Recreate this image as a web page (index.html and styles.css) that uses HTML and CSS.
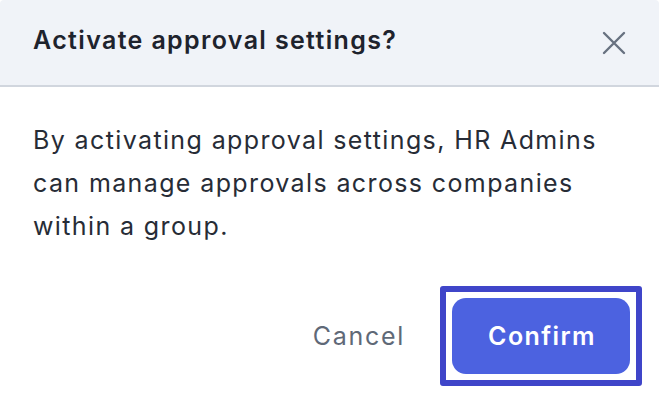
FILE: index.html
```html
<!DOCTYPE html>
<html lang="en">
<head>
<meta charset="utf-8">
<link rel="stylesheet" href="styles.css">
</head>
<body>
<div class="dialog">
  <div class="dialog-header">
    <h2 class="dialog-title">Activate approval settings?</h2>
    <button class="close-btn" aria-label="Close">
      <svg width="24" height="24" viewBox="0 0 24 24" fill="none" stroke="currentColor" stroke-width="2.4" stroke-linecap="round"><path d="M2 2L22 22M22 2L2 22"/></svg>
    </button>
  </div>
  <div class="dialog-body">
    <p class="dialog-text">By activating approval settings, HR Admins can manage approvals across companies within a group.</p>
  </div>
  <div class="dialog-footer">
    <button class="btn-cancel">Cancel</button>
    <span class="focus-ring"><button class="btn-confirm">Confirm</button></span>
  </div>
</div>
</body>
</html>
```

FILE: styles.css
```css
* { box-sizing: border-box; }
html, body { margin: 0; padding: 0; background: #ffffff; }
body { font-family: "Inter", "Noto Sans", sans-serif; width: 659px; height: 408px; overflow: hidden; }
.dialog { width: 659px; height: 408px; display: flex; flex-direction: column; background: #fff; border-radius: 4px 4px 0 0; overflow: hidden; }
.dialog-header {
  height: 87px;
  background: #f0f3f8;
  border-bottom: 2px solid #d1d6de;
  display: flex;
  align-items: center;
  justify-content: space-between;
  padding: 0 33px 5px 33px;
}
.dialog-title { margin: 0; font-size: 25px; font-weight: 600; color: #1e232d; letter-spacing: 1.35px; }
.close-btn { background: none; border: 0; padding: 0; color: #687180; display: flex; width: 24px; height: 24px; margin-top: 5px; }
.dialog-body { padding: 32px 33px 0 33px; }
.dialog-text { margin: 0; font-size: 25px; line-height: 43px; color: #272c36; width: 590px; letter-spacing: 1.38px; }
.dialog-footer { display: flex; justify-content: flex-end; align-items: center; padding: 38px 17px 21px 0; gap: 35px; }
.btn-cancel { background: none; border: 0; padding: 0; font-family: inherit; font-size: 25px; color: #5f6977; letter-spacing: 1.7px; }
.focus-ring { display: flex; padding: 6px; border: 6px solid #3f45c9; border-radius: 3px; }
.btn-confirm {
  width: 178px; height: 76px;
  border: 0; border-radius: 14px;
  background: #4c62e0; color: #fff;
  font-family: inherit; font-size: 25px; font-weight: 600; letter-spacing: 1.4px;
  padding: 0 0 0 2px;
}
```
